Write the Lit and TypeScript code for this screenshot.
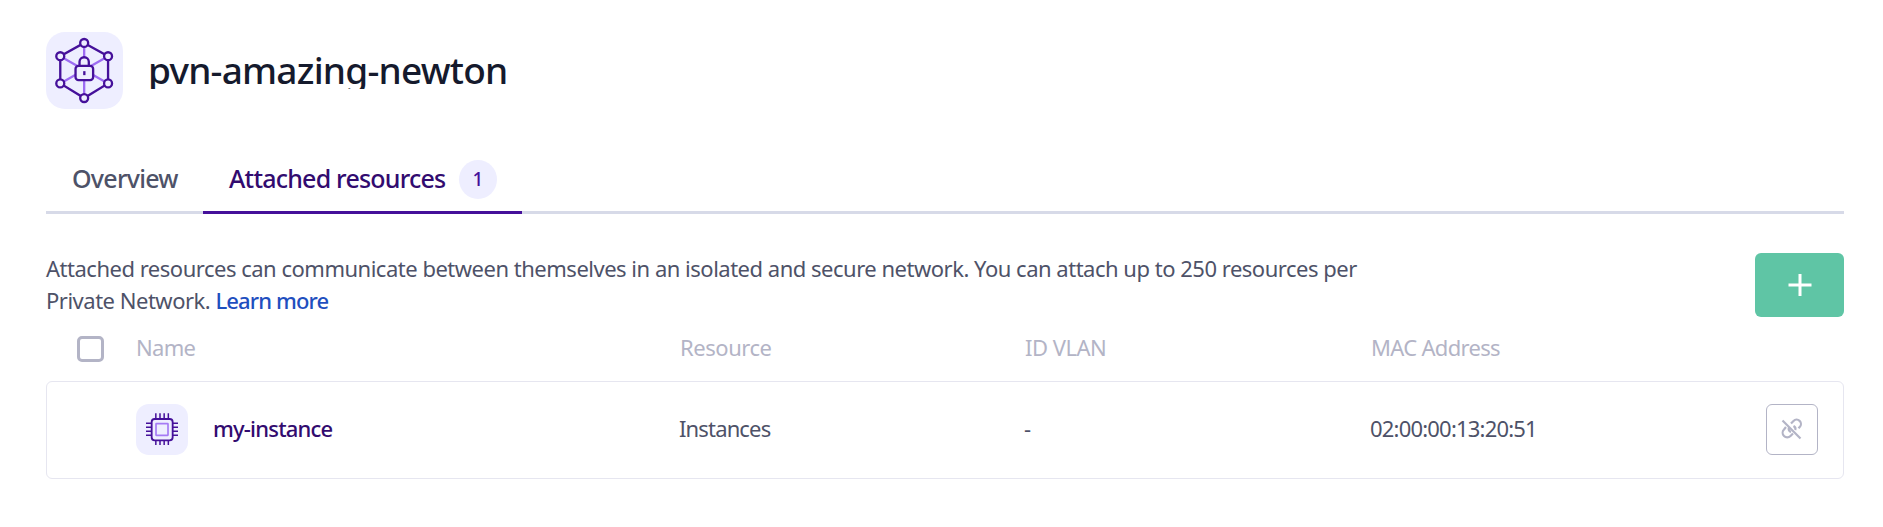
import { LitElement, html, css, svg } from "lit";
import { customElement } from "lit/decorators.js";

const nodes = [[145, 62], [217, 102], [217, 184], [145, 228], [73, 184], [73, 102]];

@customElement("network-icon")
class NetworkIcon extends LitElement {
  static styles = css`
    :host { display: block; width: 77px; height: 77px; flex: none; border-radius: 19px; background: #eeeeff; }
    svg { display: block; fill: none; stroke: #45109a; stroke-width: 7; }
    .spoke { stroke: #9d6cf2; }
    .plate { fill: #eeeeff; }
  `;
  render() {
    return html`<svg width="77" height="77" viewBox="30 29 232 232">
      <path class="spoke" d="M145 62V228M73 102L217 184M217 102L73 184" />
      <path d="M145 62L217 102V184L145 228L73 184V102Z" />
      ${nodes.map(([x, y]) => svg`<circle class="plate" cx=${x} cy=${y} r="12" />`)}
      <path class="plate" d="M131 132V119a14 14 0 0 1 28 0V132" />
      <rect class="plate" x="119" y="131" width="53" height="43" rx="9" />
      <path d="M145.500 147V159" />
    </svg>`;
  }
}

@customElement("chip-icon")
class ChipIcon extends LitElement {
  static styles = css`
    :host { display: block; width: 52px; height: 51px; flex: none; border-radius: 13px; background: #eeeeff; }
    svg { display: block; fill: none; stroke: #45109a; stroke-width: 5.500; }
    .core { stroke: #a57af5; stroke-width: 5; }
    .pins { stroke-width: 4.500; }
  `;
  render() {
    return html`<svg width="52" height="51" viewBox="48 42 156 153">
      <path class="pins" d="M107.500 70V86M120 70V86M132.500 70V86M145 70V86M107.500 151V165M120 151V165M132.500 151V165M145 151V165M78 100H94M78 112H94M78 124H94M78 136H94M159 100H174M159 112H174M159 124H174M159 136H174" />
      <rect x="95" y="87" width="63" height="64" rx="9" />
      <rect class="core" x="108" y="101" width="36" height="35" rx="1" />
    </svg>`;
  }
}

@customElement("app-root")
class AppRoot extends LitElement {
  static styles = css`
    :host {
      display: block; box-sizing: border-box; height: 527px; padding: 32px 39px 0 46px;
      background: #fff; color: #4e5268; font: 400 22px/32px "Noto Sans", sans-serif;
    }
    * { box-sizing: border-box; }
    .head { display: flex; align-items: center; gap: 25px; height: 77px; }
    h1 {
      margin: 0 0 2px; height: 38px; overflow: hidden; color: #151a2d;
      font-size: 37px; line-height: 38px; font-weight: 500; letter-spacing: -0.77px; white-space: nowrap;
    }
    .tabs { display: flex; height: 70px; margin-top: 35px; border-bottom: 3px solid #d7dae8; font-size: 25px; font-weight: 500; }
    .tab { display: flex; align-items: center; height: 70px; padding: 1px 25px 0; border-bottom: 3px solid transparent; }
    .overview { width: 157px; padding-left: 26px; letter-spacing: -0.74px; }
    .active { width: 319px; padding-left: 26px; border-color: #45109a; color: #320b6f; letter-spacing: -0.78px; }
    .label { width: 230px; white-space: nowrap; flex: none; }
    .badge { width: 38px; height: 39px; flex: none; margin-top: 2px; border-radius: 50%; background: #eeeeff; font-size: 19px; line-height: 38px; text-align: center; letter-spacing: 0; color: #45109a; }
    .intro { display: flex; justify-content: space-between; align-items: flex-start; height: 64px; margin-top: 39px; }
    p { margin: -1px 0 0; width: 1340px; letter-spacing: -0.49px; }
    a { color: #1f4fbf; font-weight: 500; letter-spacing: -0.88px; }
    .add { display: grid; place-items: center; width: 89px; height: 64px; padding: 0; border: 0; border-radius: 6px; background: #5fc5a5; }
    .grid { display: grid; grid-template-columns: 90px 544px 345px 346px 1fr; align-items: center; }
    .thead { height: 64px; color: #b3b4c6; }
    .th { margin-top: -4px; }
    .box { width: 27px; height: 26px; margin-left: 31px; border: 3px solid #b3b4c6; border-radius: 5px; }
    .row { height: 98px; border: 1px solid #e6e6f0; border-radius: 6px; padding: 0 25px 2px 0; grid-template-columns: 89px 543px 345px 346px 1fr auto; }
    .name { display: flex; align-items: center; gap: 25px; color: #320b6f; font-weight: 500; letter-spacing: -0.8px; }
    .text { margin-top: -3px; }
    .unlink { display: grid; place-items: center; width: 52px; height: 51px; padding: 0; border: 1px solid #b3b4c6; border-radius: 6px; background: #fff; }
    .a { letter-spacing: -0.7px; } .b { letter-spacing: -0.45px; } .c { letter-spacing: -0.5px; }
    .d { letter-spacing: -0.69px; } .e { letter-spacing: -0.85px; } .f { letter-spacing: -0.8px; }
  `;
  render() {
    return html`
      <header class="head"><network-icon></network-icon><h1>pvn-amazing-newton</h1></header>
      <nav class="tabs">
        <div class="tab overview">Overview</div>
        <div class="tab active"><span class="label">Attached resources</span><span class="badge">1</span></div>
      </nav>
      <section class="intro">
        <p>Attached resources can communicate between themselves in an isolated and secure network. You can attach up to 250 resources per<br>Private Network. <a>Learn more</a></p>
        <button class="add" aria-label="Attach"><svg width="24" height="24" viewBox="0 0 24 24" fill="none" stroke="#fff" stroke-width="3"><path d="M12 1V23M.5 12H23.500" /></svg></button>
      </section>
      <div class="grid thead">
        <span class="box"></span><span class="th a">Name</span><span class="th b">Resource</span><span class="th c">ID VLAN</span><span class="th d">MAC Address</span>
      </div>
      <div class="grid row">
        <span></span>
        <div class="name"><chip-icon></chip-icon><span class="text">my-instance</span></div>
        <span class="text e">Instances</span><span class="text">-</span><span class="text f">02:00:00:13:20:51</span>
        <button class="unlink" aria-label="Detach"><svg width="22" height="22" viewBox="0 0 22 22" fill="none" stroke="#b3b4c6" stroke-width="2.200"><path d="M10 5.500L12.500 3a4.200 4.200 0 0 1 6.200 6L17.500 10.300M5 9L3 11.500a4.400 4.400 0 0 0 6.500 6.500L12 15.500M8 9.500c-1 2 .2 4 2 4.500M12.500 8c1.500.8 2.300 2.500 1.700 4M1.500 2.500L19.500 20.500" /></svg></button>
      </div>`;
  }
}
